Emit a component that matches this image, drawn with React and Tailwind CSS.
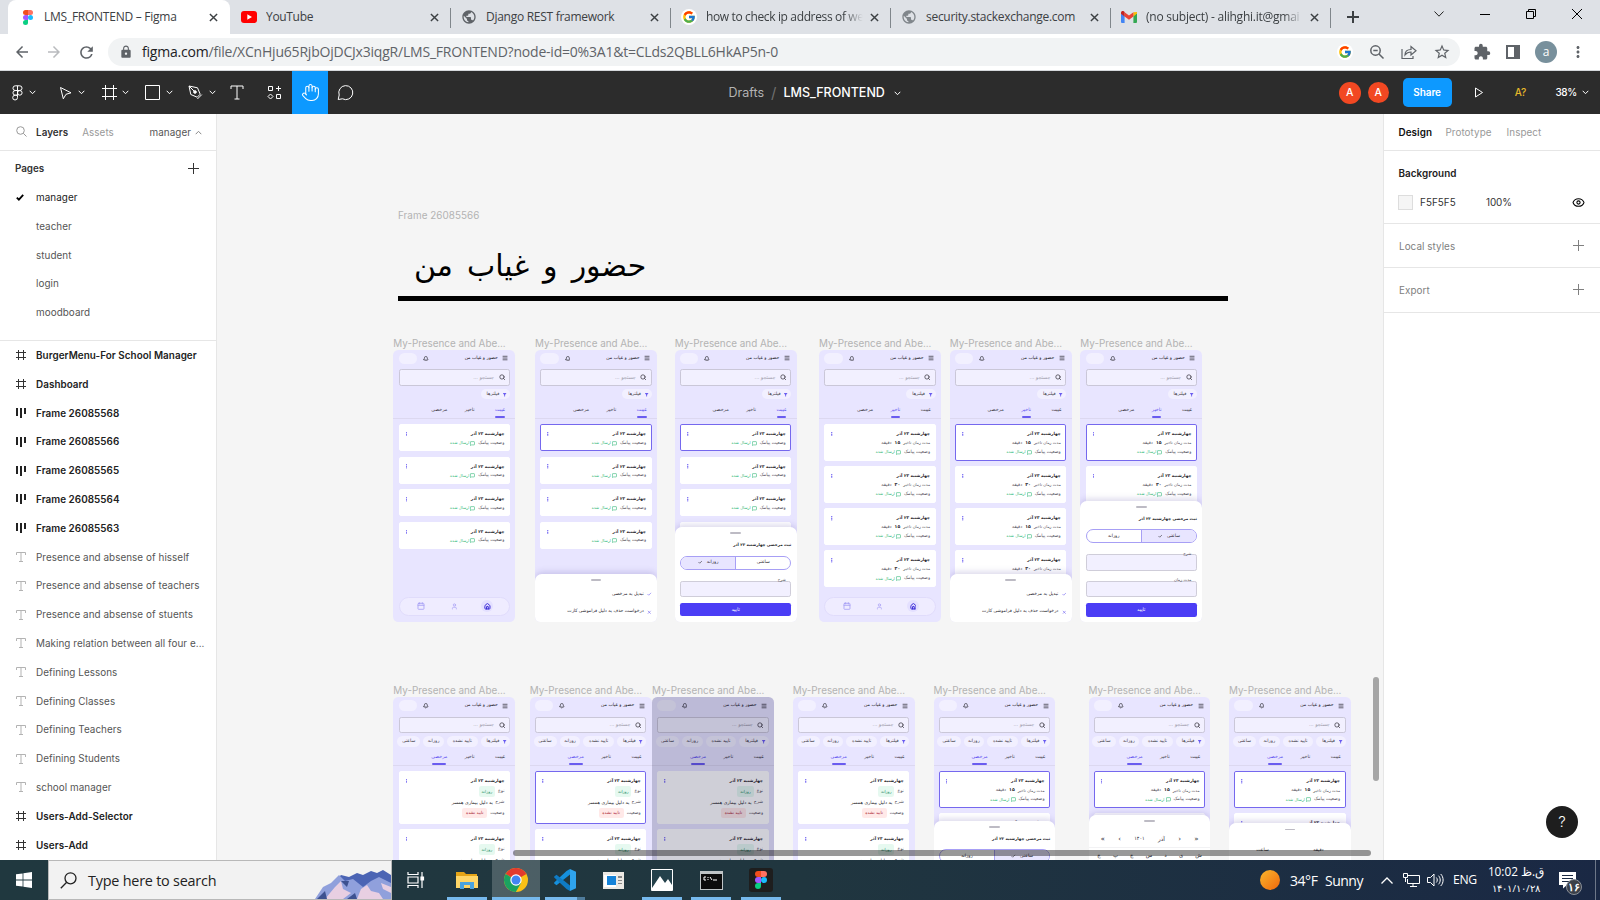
import React from "react";
import { Bell, Search, Check, X, Home, User, Calendar, Menu, MessageSquare, Hand, Eye } from "lucide-react";
import { FcGoogle } from "react-icons/fc";
import { MdPublic, MdLock, MdArrowBack, MdArrowForward, MdRefresh, MdExtension, MdStarBorder, MdMoreVert, MdFilterAlt } from "react-icons/md";

const UI = "font-['Open_Sans',sans-serif]";
const INTER = "font-['Inter',sans-serif]";
const FA = "font-['DejaVu_Sans',sans-serif]";

/* ---------- Browser chrome ---------- */

function FigmaLogo({ className }) {
  return (
    <svg viewBox="0 0 20 30" className={className}>
      <path d="M5 0h5v10H5A5 5 0 0 1 5 0z" fill="#f24e1e" />
      <path d="M10 0h5a5 5 0 0 1 0 10h-5z" fill="#ff7262" />
      <path d="M5 10h5v10H5a5 5 0 0 1 0-10z" fill="#a259ff" />
      <circle cx="15" cy="15" r="5" fill="#1abcfe" />
      <path d="M5 20h5v5a5 5 0 1 1-5-5z" fill="#0acf83" />
    </svg>
  );
}

function YoutubeLogo() {
  return (
    <svg viewBox="0 0 16 12" className="h-3 w-4">
      <rect width="16" height="12" rx="3" fill="#f00" />
      <path d="M6.3 3.3 11 6 6.3 8.7z" fill="#fff" />
    </svg>
  );
}

function GmailLogo() {
  return (
    <svg viewBox="0 0 16 12" className="h-3 w-4">
      <path d="M0 2v9a1 1 0 0 0 1 1h2.6V4.8z" fill="#4285f4" />
      <path d="M16 2v9a1 1 0 0 1-1 1h-2.6V4.8z" fill="#34a853" />
      <path d="M12.4 1.2 16 1v1.6l-3.6 2.8z" fill="#fbbc04" />
      <path d="M3.6 1.2 8 4.5l4.4-3.3v4.2L8 8.7 3.6 5.4z" fill="#ea4335" />
      <path d="M0 1.8C0 .2 1.8-.5 3 .5l.6.6v4.3L0 2.7z" fill="#c5221f" />
    </svg>
  );
}

const tabs = [
  { icon: <div className="flex w-4 justify-center"><FigmaLogo className="h-[15px] w-[10px]" /></div>, title: "LMS_FRONTEND – Figma", active: true, track: "tracking-[-0.250px]" },
  { icon: <YoutubeLogo />, title: "YouTube", track: "tracking-[-0.320px]" },
  { icon: <MdPublic className="size-4 text-[#5f6368]" />, title: "Django REST framework", line: true, track: "tracking-[-0.280px]" },
  { icon: <div className="flex size-4 items-center justify-center rounded-full bg-white"><FcGoogle className="size-[14px]" /></div>, title: "how to check ip address of we", line: true, fade: true, track: "tracking-[-0.360px]" },
  { icon: <MdPublic className="size-4 text-[#80868b]" />, title: "security.stackexchange.com", line: true, track: "tracking-[-0.280px]" },
  { icon: <GmailLogo />, title: "(no subject) - alihghi.it@gmai", line: true, fade: true, track: "tracking-[-0.240px]" },
];

function CloseX({ className }) {
  return (
    <svg viewBox="0 0 10 10" className={className} stroke="currentColor" strokeWidth="1.6">
      <path d="M1 1l8 8M9 1l-8 8" />
    </svg>
  );
}

function TabStrip() {
  return (
    <div className={`flex h-[34px] bg-[#dee1e6] pl-2 ${UI} text-[12px] text-[#3c4043]`}>
      {tabs.map((t) => (
        <div
          key={t.title}
          className={
            t.active
              ? "relative flex w-[222px] shrink-0 items-center rounded-t-lg bg-white pr-3 pl-3"
              : `relative flex w-[220px] shrink-0 items-center pr-[11px] pl-[11px] ${t.line ? "before:absolute before:top-2 before:left-0 before:h-5 before:w-px before:bg-[#80868b]" : ""}`
          }
        >
          {t.icon}
          <span
            className={`${t.active ? "ml-2" : "ml-[9px]"} w-[160px] overflow-hidden whitespace-nowrap ${t.track} ${t.fade ? "[mask-image:linear-gradient(to_right,black_86%,transparent_98%)]" : ""}`}
          >
            {t.title}
          </span>
          <CloseX className="ml-auto size-[9px] shrink-0 text-[#3c4043]" />
        </div>
      ))}
      <div className="relative flex w-[46px] items-center justify-center before:absolute before:top-2 before:left-0 before:h-5 before:w-px before:bg-[#80868b]">
        <svg viewBox="0 0 12 12" className="size-3" stroke="#3c4043" strokeWidth="2">
          <path d="M6 0v12M0 6h12" />
        </svg>
      </div>
      <div className="ml-auto flex h-7 items-center text-black">
        <div className="flex w-[46px] justify-center">
          <svg viewBox="0 0 10 6" className="h-[6px] w-[10px]" fill="none" stroke="#222"><path d="M.5.5 5 5.2 9.500.5" /></svg>
        </div>
        <div className="flex w-[46px] justify-center"><div className="h-px w-[10px] bg-black" /></div>
        <div className="flex w-[46px] justify-center">
          <svg viewBox="0 0 10 10" className="size-[10px]" fill="none" stroke="#000"><path d="M.5 2.500h7v7h-7zM2.500 2.500v-2h7v7h-2" /></svg>
        </div>
        <div className="flex w-[46px] justify-center">
          <svg viewBox="0 0 10 10" className="size-[10px]" stroke="#000"><path d="M0 0l10 10M10 0 0 10" /></svg>
        </div>
      </div>
    </div>
  );
}

function AddressBar() {
  return (
    <div className="flex h-[37px] items-center border-b border-[#d5d8dc] bg-white text-[#5f6368]">
      <div className="flex w-[108px] items-center gap-[14px] pl-[13px]">
        <MdArrowBack className="size-[18px]" />
        <MdArrowForward className="size-[18px] text-[#b9bbbe]" />
        <MdRefresh className="size-[19px]" />
      </div>
      <div className="flex h-7 w-[1352px] items-center rounded-full bg-[#f1f3f4] pr-[9px] pl-[11px]">
        <MdLock className="size-[14px]" />
        <span className={`ml-[9px] ${UI} text-[14px] leading-5 tracking-[-0.210px] whitespace-nowrap`}>
          <span className="text-[#202124]">figma.com</span>/file/XCnHju65RjbOjDCJx3iqgR/LMS_FRONTEND?node-id=0%3A1&amp;t=CLds2QBLL6HkAP5n-0
        </span>
        <div className="ml-auto flex items-center gap-4">
          <div className="flex size-4 items-center justify-center rounded-full bg-white"><FcGoogle className="size-[14px]" /></div>
          <svg viewBox="0 0 16 16" className="size-4" fill="none" stroke="currentColor" strokeWidth="1.5"><circle cx="6.500" cy="6.500" r="4.700" /><path d="M10 10l4.500 4.500M4.300 6.500h4.400" /></svg>
          <svg viewBox="0 0 16 16" className="size-4" fill="none" stroke="currentColor" strokeWidth="1.200"><path d="M1 5v9.500h11V12M4 11c0-3.500 2-5.500 6-5.500V2.500l5 4.200-5 4.200V8C7.500 8 5.500 9 4 11z" /></svg>
          <MdStarBorder className="size-[18px]" />
        </div>
      </div>
      <div className="flex flex-1 items-center justify-between pr-[13px] pl-[13px]">
        <MdExtension className="size-[18px]" />
        <svg viewBox="0 0 14 14" className="ml-[3px] size-[14px]" fill="none" stroke="currentColor" strokeWidth="2"><path d="M1 1h12v12H1z" /><path d="M9 1h4v12H9z" fill="currentColor" /></svg>
        <div className={`ml-[3px] flex size-[22px] items-center justify-center rounded-full bg-[#78909c] ${UI} text-[12px] text-white`}>a</div>
        <MdMoreVert className="size-[18px]" />
      </div>
    </div>
  );
}

/* ---------- Editor toolbar ---------- */

function Caret({ className = "" }) {
  return (
    <svg viewBox="0 0 7 5" className={`h-[5px] w-[7px] shrink-0 ${className}`} fill="none" stroke="currentColor">
      <path d="M.7.8 3.500 3.700 6.300.8" />
    </svg>
  );
}

function Tool({ children, className }) {
  return <div className={`flex h-full shrink-0 items-center ${className}`}>{children}</div>;
}

function EditorBar() {
  return (
    <div className={`flex h-[43px] items-center bg-[#2c2c2c] text-white ${INTER}`}>
      <div className="flex h-full w-[728.500px] items-center">
        <Tool className="w-[48px] gap-[6px] pl-[12px]">
          <svg viewBox="0 0 11 16" className="h-4 w-[11px]" fill="none" stroke="currentColor">
            <path d="M5.500.8H3.300a2.300 2.300 0 0 0 0 4.700h2.200zM5.500.8h2.200a2.300 2.300 0 0 1 0 4.700H5.500zM5.500 5.500H3.300a2.300 2.300 0 0 0 0 4.700h2.200zM5.500 10.200H3.300a2.400 2.400 0 1 0 2.200 2.400z" />
            <circle cx="7.800" cy="7.850" r="2.300" />
          </svg>
          <Caret />
        </Tool>
        <Tool className="w-[50px] gap-[6px] pl-[11px]">
          <svg viewBox="0 0 13 14" className="h-[14px] w-[13px]" fill="none" stroke="currentColor"><path d="M1.500 1.500 12 6.800 7 8.300 4.300 12.800z" /></svg>
          <Caret />
        </Tool>
        <Tool className="w-[44px] gap-[5px] pl-[4px]">
          <svg viewBox="0 0 15 15" className="size-[15px]" fill="none" stroke="currentColor"><path d="M3.500 0v15M11.500 0v15M0 3.500h15M0 11.500h15" /></svg>
          <Caret />
        </Tool>
        <Tool className="w-[43px] gap-[6px] pl-[3px]">
          <svg viewBox="0 0 15 15" className="size-[15px]" fill="none" stroke="currentColor"><path d="M.5.5h14v14H.5z" /></svg>
          <Caret />
        </Tool>
        <Tool className="w-[44px] gap-[6px] pl-[3px]">
          <svg viewBox="0 0 15 15" className="size-[15px]" fill="none" stroke="currentColor">
            <path d="M1 1l8.500 1.800 2.700 6.400-3 3-6.400-2.700zM1 1l5 5M13.800 9.600l-4.400 4.400" /><circle cx="7" cy="7" r="1.300" fill="currentColor" />
          </svg>
          <Caret />
        </Tool>
        <Tool className="w-[30px] pl-px">
          <svg viewBox="0 0 14 15" className="h-[15px] w-[14px]" fill="none" stroke="currentColor"><path d="M1 4V1h12v3M7 1v13M4.500 14h5" /></svg>
        </Tool>
        <Tool className="w-[33px] pl-[8px]">
          <svg viewBox="0 0 15 15" className="size-[15px]" fill="none" stroke="currentColor"><path d="M1.500 1.500h4v4h-4zM9.500 9.500h4v4h-4zM11.500 1v5M9 3.500h5M3.500 9 6 11.500 3.500 14 1 11.500z" /></svg>
        </Tool>
        <Tool className="w-[36px] justify-center bg-[#0d99ff]">
          <Hand className="size-[19px]" strokeWidth={1.3} />
        </Tool>
        <Tool className="w-[35px] pl-[9px]">
          <svg viewBox="0 0 17 17" className="size-[17px]" fill="none" stroke="currentColor"><path d="M1.200 15.500 2.200 11A7 7 0 1 1 5.500 14.800z" /></svg>
        </Tool>
      </div>
      <div className="flex items-center pt-px text-[12.500px]">
        <span className="text-[#b3b3b3]">Drafts</span>
        <span className="mx-[7px] text-[15px] text-[#6f6f6f]">/</span>
        <span className="font-medium">LMS_FRONTEND</span>
        <Caret className="ml-[9px]" />
      </div>
      <div className="ml-auto flex items-center text-[10px] font-medium">
        <div className="flex size-[22px] items-center justify-center rounded-full bg-[#f24822] text-[10.500px]">A</div>
        <div className="ml-[7px] flex size-[21px] items-center justify-center rounded-full bg-[#f24822] text-[10.500px]">A</div>
        <div className="ml-[14px] flex h-[29px] w-[49px] items-center justify-center rounded-[5px] bg-[#0d99ff] font-semibold tracking-[-0.1px]">Share</div>
        <svg viewBox="0 0 10 11" className="ml-[22px] h-[11px] w-[10px]" fill="none" stroke="currentColor"><path d="M1.500 1v9l7-4.500z" /></svg>
        <span className="ml-[31px] text-[#e5b82a]">A?</span>
        <span className="ml-[29px] tracking-[-0.3px]">38%</span>
        <Caret className="mr-[11px] ml-[5px]" />
      </div>
    </div>
  );
}

/* ---------- Left panel ---------- */

const pages = ["manager", "teacher", "student", "login", "moodboard"];
const layers = [
  ["frame", "BurgerMenu-For School Manager"],
  ["frame", "Dashboard"],
  ["auto", "Frame 26085568"],
  ["auto", "Frame 26085566"],
  ["auto", "Frame 26085565"],
  ["auto", "Frame 26085564"],
  ["auto", "Frame 26085563"],
  ["text", "Presence and absense of hisself"],
  ["text", "Presence and absense of teachers"],
  ["text", "Presence and absense of stuents"],
  ["text", "Making relation between all four e..."],
  ["text", "Defining Lessons"],
  ["text", "Defining Classes"],
  ["text", "Defining Teachers"],
  ["text", "Defining Students"],
  ["text", "school manager"],
  ["frame", "Users-Add-Selector"],
  ["frame", "Users-Add"],
];

function LayerIcon({ kind }) {
  if (kind === "frame")
    return <svg viewBox="0 0 10 10" className="size-[10px]" fill="none" stroke="#333"><path d="M2.500 0v10M7.500 0v10M0 2.500h10M0 7.500h10" /></svg>;
  if (kind === "auto")
    return <svg viewBox="0 0 10 10" className="size-[10px]" fill="#222"><path d="M0 0h2v8H0zM4 0h2v10H4zM8 0h2v6H8z" /></svg>;
  return <svg viewBox="0 0 10 10" className="size-[10px]" fill="none" stroke="#b3b3b3"><path d="M.5 3V.5h9V3M5 .5v9M3 9.500h4" /></svg>;
}

function LeftPanel() {
  return (
    <div className="flex w-[217px] shrink-0 flex-col overflow-hidden border-r border-[#e6e6e6] bg-white text-[#333]">
      <div className="flex h-[37px] shrink-0 items-center border-b border-[#e6e6e6] pr-[14px] pl-[16px]">
        <svg viewBox="0 0 11 11" className="-mt-[2px] size-[11px]" fill="none" stroke="#999"><circle cx="4.500" cy="4.500" r="3.800" /><path d="M7.300 7.300l3.200 3.200" /></svg>
        <span className="ml-[9px] font-semibold">Layers</span>
        <span className="ml-[14px] text-[#999]">Assets</span>
        <span className="ml-auto text-[#555]">manager</span>
        <Caret className="ml-[4px] rotate-180 text-[#888]" />
      </div>
      <div className="flex h-[32px] shrink-0 items-center justify-between pt-[3px] pr-[17px] pl-[15px]">
        <span className="font-semibold tracking-[-0.05px]">Pages</span>
        <svg viewBox="0 0 11 11" className="-mt-px size-[11px]" stroke="#333"><path d="M5.500 0v11M0 5.500h11" /></svg>
      </div>
      <div className="h-[158px] shrink-0 border-b border-[#e6e6e6]">
        {pages.map((p, i) => (
          <div key={p} className={`flex h-[28.8px] items-center pl-[16px] ${i === 0 ? "text-[#222]" : "text-[#555]"}`}>
            <div className="w-5">
              {i === 0 && <svg viewBox="0 0 8 7" className="h-[7px] w-2" fill="none" stroke="#000" strokeWidth="1.800"><path d="M.8 3.600 2.900 5.700 7.200.9" /></svg>}
            </div>
            {p}
          </div>
        ))}
      </div>
      <div className="flex flex-col">
        {layers.map(([kind, name]) => (
          <div key={name} className={`flex h-[28.8px] shrink-0 items-center pl-[16px] whitespace-nowrap ${kind === "text" ? "text-[#555]" : "font-semibold text-[#222]"}`}>
            <div className="w-5"><LayerIcon kind={kind} /></div>
            {name}
          </div>
        ))}
      </div>
    </div>
  );
}

/* ---------- Right panel ---------- */

function PlusRow({ label, className }) {
  return (
    <div className={`flex items-center justify-between border-b border-[#e6e6e6] pr-[16px] pl-[15px] text-[#808080] ${className}`}>
      <span className="pt-px">{label}</span>
      <svg viewBox="0 0 11 11" className="-mt-px size-[11px]" stroke="#808080"><path d="M5.500 0v11M0 5.500h11" /></svg>
    </div>
  );
}

function RightPanel() {
  return (
    <div className="flex w-[217px] shrink-0 flex-col border-l border-[#e6e6e6] bg-white text-[#333]">
      <div className="flex h-[37px] items-center gap-[13px] border-b border-[#e6e6e6] pl-[14.500px] text-[#999]">
        <span className="font-semibold text-[#111]">Design</span>
        <span className="pl-[0.500px]">Prototype</span>
        <span className="pl-[2px]">Inspect</span>
      </div>
      <div className="h-[73px] border-b border-[#e6e6e6] pt-[8px] pr-[15px] pl-[14px]">
        <div className="flex h-[29px] items-center pl-[0.500px] font-semibold text-[#222]">Background</div>
        <div className="flex h-[28px] items-center">
          <div className="size-[15px] border border-[#ddd] bg-[#f5f5f5]" />
          <span className="ml-[7px] w-[66px]">F5F5F5</span>
          <span className="tracking-[-0.1px]">100%</span>
          <Eye className="ml-auto size-[13px] text-black" />
        </div>
      </div>
      <PlusRow label="Local styles" className="h-[44px] pt-px" />
      <PlusRow label="Export" className="h-[45px]" />
      <div className="mt-auto flex justify-end pr-[22px] pb-[22px]">
        <div className="flex size-8 items-center justify-center rounded-full bg-[#1e1e1e] text-[15px] font-light text-white">?</div>
      </div>
    </div>
  );
}

/* ---------- Mobile frames (320 x 715 design units) ---------- */

function Chip({ children, className }) {
  return <div className={`flex h-[27px] shrink-0 items-center rounded-full bg-[#f2f0ff] text-[12px] whitespace-nowrap text-[#3c3943] ${className}`}>{children}</div>;
}

function CardShell({ selected, className, children }) {
  return (
    <div className={`flex shrink-0 flex-col rounded-[5px] bg-white pr-[12px] pl-[16px] whitespace-nowrap ${selected ? "border-[2.600px] border-[#7568ee]" : "border-2 border-white"} ${className}`}>
      {children}
    </div>
  );
}

function CardTitle({ className }) {
  return (
    <div className={`flex items-center justify-between ${className}`}>
      <span className="text-[11px] font-bold text-[#1c1b1f]">چهارشنبه ۲۳ آذر</span>
      <svg viewBox="0 0 4 12" className="h-3 w-1" fill="#5a4bf0"><circle cx="2" cy="1.800" r="1.700" /><circle cx="2" cy="6" r="1.700" /><circle cx="2" cy="10.200" r="1.700" /></svg>
    </div>
  );
}

function SmsRow() {
  return (
    <div className="flex h-6 items-center text-[12px]">
      <span className="text-[#55525b]">وضعیت پیامک</span>
      <MessageSquare className="mr-[8px] size-[13px] text-[#2bb673]" strokeWidth={2.800} />
      <span className="mr-[3px] text-[10.500px] text-[#2bb673]">ارسال شده</span>
    </div>
  );
}

function Card({ kind, selected, index }) {
  const row = "flex h-7 items-center text-[12px] text-[#55525b]";
  if (kind === "leave")
    return (
      <CardShell selected={selected} className="h-[138px] pt-[9px]">
        <CardTitle className="h-7" />
        <div className={row}>
          نوع<span className="mr-[8px] flex h-7 w-[43px] items-center justify-center rounded-[6px] bg-[#e6f9f0] text-[11px] text-[#12875a]">روزانه</span>
        </div>
        <div className={row}>
          شرح<span className="mr-[6px] text-[12.300px] text-[#1c1b1f]">به دلیل بیماری همسر</span>
        </div>
        <div className={row}>
          وضعیت<span className="mr-[8px] flex h-7 w-[66px] items-center justify-center rounded-[6px] bg-[#ffe9e8] text-[11px] text-[#a8182f]">تایید نشده</span>
        </div>
      </CardShell>
    );
  return (
    <CardShell selected={selected} className={kind === "late" ? "h-[96px] pt-3" : "h-[71px] pt-3"}>
      <CardTitle className="h-6" />
      {kind === "late" && (
        <div className="flex h-6 items-center text-[10.500px] text-[#55525b]">
          مدت زمان تاخیر<span className="mx-[8px] text-[12px] font-bold text-[#2a2830]">{index % 2 ? "۳۰" : "۱۵"}</span><span className="text-[12px]">دقیقه</span>
        </div>
      )}
      <SmsRow />
    </CardShell>
  );
}

function Segmented({ hourly }) {
  const on = "bg-[#e8e5ff]";
  return (
    <div className="flex h-[37px] shrink-0 overflow-hidden rounded-full border-[2.600px] border-[#a79ff5] text-[12px] text-[#2a2830]">
      <div className={`flex flex-1 items-center justify-center gap-3 border-l-[2.600px] border-[#a79ff5] ${hourly ? on : ""}`}>ساعتی{hourly && <Check className="size-3" strokeWidth={3} />}</div>
      <div className={`flex flex-1 items-center justify-center gap-3 ${hourly ? "" : on}`}>روزانه{!hourly && <Check className="size-3" strokeWidth={3} />}</div>
    </div>
  );
}

function Field({ label, className }) {
  return (
    <div className={`relative h-[43px] shrink-0 rounded-[6px] border-2 border-[#cfcdd9] bg-[#f2f0ff] ${className}`}>
      <span className="absolute -top-[12px] right-[12px] text-[10.500px] leading-[14px] whitespace-nowrap text-[#55525b]">{label}</span>
    </div>
  );
}

const Handle = () => <div className="mx-auto h-[4px] w-7 shrink-0 rounded-full bg-[#bdbbc4]" />;

function Sheet({ sheet }) {
  return (
    <div
      className="absolute inset-x-0 bottom-0 flex flex-col overflow-hidden rounded-t-[18px] bg-white px-[14px] pt-[14px] text-[12px] whitespace-nowrap text-[#2a2830] shadow-[0_-4px_18px_rgba(80,70,160,0.22)]"
      style={{ top: sheet.top }}
    >
      <Handle />
      {sheet.type === "menu" && (
        <div className="flex flex-col pt-[13px]">
          <div className="flex h-[46px] items-center"><Check className="ml-[9px] size-3 text-[#6a5cf0]" strokeWidth={3} />تبدیل به مرخصی</div>
          <div className="flex h-[46px] items-center"><X className="ml-[9px] size-3 text-[#6a5cf0]" strokeWidth={3} />درخواست حذف به دلیل فراموشی کارت</div>
        </div>
      )}
      {(sheet.type === "hourly" || sheet.type === "daily") && (
        <>
          <div className="mt-[21px] mb-[18px] h-[18px] shrink-0 text-[10.500px] leading-[18px] font-bold text-[#1c1b1f]">ثبت مرخصی چهارشنبه ۲۳ آذر</div>
          <Segmented hourly={sheet.type === "hourly"} />
          <Field label="شرح" className="mt-[29px]" />
          {sheet.type === "hourly" && <Field label="مدت زمان" className="mt-[27px]" />}
          <div className="mt-4 flex h-[35px] shrink-0 items-center justify-center rounded-[6px] bg-[#4b3df5] text-[13px] text-white">تایید</div>
        </>
      )}
      {sheet.type === "calendar" && (
        <>
          <div className="mt-[33px] flex h-6 shrink-0 items-center justify-between px-[18px] text-[15px]">
            <span className="text-[18px] leading-none">«</span><span className="text-[18px] leading-none">‹</span><span>آذر</span><span className="text-[13px]">۱۴۰۱</span><span className="text-[18px] leading-none">›</span><span className="text-[18px] leading-none">»</span>
          </div>
          <div className="-mx-[14px] mt-[8px] h-[5px] shrink-0 bg-[#f2f2f4]" />
          <div className="mt-[13px] flex justify-between px-[9px] text-[14px] leading-none">
            {"شیدسچپج".split("").map((c) => <span key={c}>{c}</span>)}
          </div>
        </>
      )}
      {sheet.type === "time" && <div className="mt-[44px] flex justify-between px-[58px]"><span>دقیقه</span><span>ساعت</span></div>}
    </div>
  );
}

const tabDefs = [["غیبت", "w-[26px]"], ["تاخیر", "w-[24px]"], ["مرخصی", "w-[37px]"]];

function Phone({ phone }) {
  const { tab, kind, count, selected, sheet, nav, chips, dim } = phone;
  return (
    <div dir="rtl" className={`relative h-[715px] w-[321px] overflow-hidden rounded-[14px] bg-[#e8e5ff] [zoom:0.38] ${FA}`}>
      <div className="flex h-11 items-center pr-[18px] pl-[14px]">
        <Menu className="size-[16px] text-[#3c3943]" strokeWidth={3} />
        <span className="mr-[12px] text-[12px] text-[#1c1b1f]">حضور و غیاب من</span>
        <Bell className="mr-auto size-[15px] text-[#1c1b1f]" strokeWidth={2.500} />
        <div className="mr-4 h-[29px] w-12 rounded-full bg-[#f2f0ff]" />
      </div>
      <div className="mx-[14px] mt-[7px] flex h-[43px] items-center rounded-[6px] border-2 border-[#cac7d8] bg-[#f2f0ff] pr-[10px]">
        <Search className="size-[17px] text-[#3c3943]" strokeWidth={2.800} />
        <span className="mr-[12px] text-[13px] text-[#a09dac]">جستجو ...</span>
      </div>
      <div className="mt-[9px] flex pr-[14px]">
        <Chip className="w-[77px] gap-[7px] pr-[7px]"><MdFilterAlt className="size-[14px] text-[#6a5cf0]" />فیلترها</Chip>
        {chips && (
          <>
            <Chip className="mr-2 w-[81px] justify-center">تایید نشده</Chip>
            <Chip className="mr-2 w-[54px] justify-center">روزانه</Chip>
            <Chip className="mr-2 w-[61px] justify-center">ساعتی</Chip>
          </>
        )}
      </div>
      <div className="flex h-[51px] border-b-2 border-[#dcd8f0]">
        {tabDefs.map(([name, w], i) => (
          <div key={name} className={`flex w-20 flex-col items-center pt-[19px] text-[12.500px] leading-[18px] ${tab === i ? "text-[#5a4bf0]" : "text-[#3c3943]"}`}>
            {name}
            {tab === i && <div className={`mt-auto h-[5px] rounded-full bg-[#6a5cf0] ${w}`} />}
          </div>
        ))}
      </div>
      <div className="flex flex-col gap-[14.700px] px-[14px] pt-[14px]">
        {Array.from({ length: count }, (_, i) => <Card key={i} kind={kind} selected={selected && i === 0} index={i} />)}
      </div>
      {nav && (
        <div className="absolute right-[14px] bottom-[15px] left-[14px] flex h-[51px] items-center justify-between rounded-full border-2 border-[#e0dcfb] bg-[#efecff] pr-[41px] pl-[40px]">
          <div className="flex size-8 items-center justify-center rounded-full bg-[#e4e0ff]"><Home className="size-[18px] text-[#3a2bd8]" strokeWidth={3.500} /></div>
          <div className="flex w-8 justify-center"><User className="size-[18px] text-[#a79ff5]" strokeWidth={2.500} /></div>
          <div className="flex w-8 justify-center"><Calendar className="size-[21px] text-[#a79ff5]" strokeWidth={2.500} /></div>
        </div>
      )}
      {sheet && <Sheet sheet={sheet} />}
      {dim && <div className="absolute inset-0 bg-[#00002c]/19" />}
    </div>
  );
}

const phones = [
  { x: 176.3, y: 236, tab: 0, kind: "absent", count: 4, nav: true },
  { x: 318, y: 236, tab: 0, kind: "absent", count: 4, selected: true, sheet: { type: "menu", top: 589 } },
  { x: 457.7, y: 236, tab: 0, kind: "absent", count: 4, selected: true, sheet: { type: "daily", top: 466 } },
  { x: 602, y: 236, tab: 1, kind: "late", count: 4, nav: true },
  { x: 732.7, y: 236, tab: 1, kind: "late", count: 4, selected: true, sheet: { type: "menu", top: 589 } },
  { x: 863.3, y: 236, tab: 1, kind: "late", count: 2, selected: true, sheet: { type: "hourly", top: 397 } },
  { x: 176.3, y: 583.3, tab: 2, kind: "leave", count: 2, chips: true },
  { x: 312.7, y: 583.3, tab: 2, kind: "leave", count: 2, chips: true, selected: true },
  { x: 435, y: 583.3, tab: 2, kind: "leave", count: 2, chips: true, dim: true },
  { x: 575.7, y: 583.3, tab: 2, kind: "leave", count: 2, chips: true },
  { x: 716.5, y: 583.3, tab: 2, kind: "late", count: 2, chips: true, selected: true, sheet: { type: "hourly", top: 325 } },
  { x: 871.5, y: 583.3, tab: 2, kind: "late", count: 2, chips: true, selected: true, sheet: { type: "calendar", top: 310 } },
  { x: 1012, y: 583.3, tab: 2, kind: "late", count: 2, chips: true, selected: true, sheet: { type: "time", top: 332 } },
];

function Canvas() {
  return (
    <div className="relative flex-1 overflow-hidden bg-[#f5f5f5]">
      <div className="absolute top-[94px] left-[181px] leading-[14px] text-[#b3b3b3]">Frame 26085566</div>
      <div dir="rtl" className={`absolute top-[130px] left-[181px] flex h-[57px] w-[830px] justify-end border-b-[5px] border-black pl-4 text-[30px] leading-[44px] text-black [word-spacing:4.500px] ${FA}`}>
        حضور و غیاب من
      </div>
      {phones.map((p) => (
        <div key={`${p.x}-${p.y}`} className="absolute" style={{ left: p.x, top: p.y - 14 }}>
          <div className="h-[14px] leading-[14px] tracking-[-0.01px] whitespace-nowrap text-[#b3b3b3]">My-Presence and Abe...</div>
          <Phone phone={p} />
        </div>
      ))}
      <div className="absolute top-[736px] left-[296px] h-[6px] w-[858px] rounded-full bg-black/40" />
      <div className="absolute top-[563px] right-[4px] h-[104px] w-[6px] rounded-full bg-[#a6a6a6]" />
    </div>
  );
}

/* ---------- Taskbar ---------- */

function TaskItem({ children, bar, active, className = "" }) {
  return (
    <div className={`relative flex h-full w-12 shrink-0 items-center justify-center ${active ? "bg-white/20" : ""} ${className}`}>
      {children}
      {bar && <div className={`absolute bottom-0 h-[3px] bg-[#76b9ed] ${bar}`} />}
    </div>
  );
}

function Taskbar() {
  return (
    <div className={`flex h-10 items-center bg-linear-to-r from-[#20383f] via-[#20363f] to-[#1a2844] text-white ${UI}`}>
      <div className="flex w-12 justify-center">
        <svg viewBox="0 0 16 16" className="size-4" fill="#fff"><path d="M0 2.300 6.600 1.400v6.200H0zM7.400 1.300 16 0v7.600H7.400zM0 8.400h6.600v6.200L0 13.700zM7.400 8.400H16V16l-8.600-1.300z" /></svg>
      </div>
      <div className="flex h-10 w-[344px] items-center border border-[#b8b8b8] bg-[#f2f2f2] pl-[11px] text-[#222]">
        <svg viewBox="0 0 17 17" className="size-[17px]" fill="none" stroke="#222" strokeWidth="1.300"><circle cx="10.500" cy="6.300" r="5.500" /><path d="M6.700 10.300.8 16.300" /></svg>
        <span className="ml-[11px] pt-px text-[14.400px] tracking-[-0.220px] whitespace-nowrap">Type here to search</span>
        <svg viewBox="0 0 78 30" className="mt-[8px] ml-auto h-[30px] w-[78px]">
          <path d="M8 22 22 12l6-6 8 2 8-4 6 2 8-4 6 2 6-3 8 5v26H4z" fill="#4b64b4" />
          <path d="M2 30 10 18l8-4 8-8 6 6 8-2 10 8 8-6 8-4 12 6v16z" fill="#90a0dc" />
          <path d="M12 30l10-12 6-6 2 8 8 4-8 6zM44 30l4-10 6-4 4 6 8 2 4 6zM68 14l10 4v6l-8-4z" fill="#e8cfe2" />
          <path d="M4 30l8-8 2 8zM34 30l8-6 2 6zM28 12l6 6 2-6z" fill="#3d5190" />
        </svg>
      </div>
      <TaskItem>
        <svg viewBox="0 0 18 16" className="h-4 w-[18px]" fill="none" stroke="#fff" strokeWidth="1.200"><path d="M1 0v2.500h10V0M1 5h10v6H1zM1 16v-2.500h10V16M15 0v16" /><path d="M14 5h2.500v3H14z" fill="#fff" /></svg>
      </TaskItem>
      <TaskItem bar="w-10" className="ml-[3px]">
        <svg viewBox="0 0 22 18" className="h-[18px] w-[22px]"><path d="M0 1h8l2 2h11v13H0z" fill="#e5a417" /><path d="M0 5h22v12H0z" fill="#ffd667" /><path d="M4 18v-7h14v7h-4v-4H8v4z" fill="#4aa3df" /></svg>
      </TaskItem>
      <TaskItem active bar="w-12" className="ml-px">
        <svg viewBox="0 0 24 24" className="size-6">
          <circle cx="12" cy="12" r="12" fill="#fbc116" />
          <path d="M12 12 1.600 6A12 12 0 0 1 22.400 6z" fill="#e33b2e" />
          <path d="M12 12 1.600 6a12 12 0 0 0 10.200 18L17 15z" fill="#1aa260" />
          <circle cx="12" cy="12" r="5.700" fill="#fff" /><circle cx="12" cy="12" r="4.500" fill="#4285f4" />
        </svg>
      </TaskItem>
      <TaskItem bar="left-[5px] w-[32px]">
        <svg viewBox="0 0 24 24" className="ml-[2px] size-6">
          <path d="M17 1v5.500L3.500 17.200 1.200 15.500v-1L13.500 3z" fill="#1590dd" />
          <path d="M17 23v-5.500L3.500 6.800 1.200 8.500v1L13.500 21z" fill="#0f7bc4" />
          <path d="M17 1l6 2.800v16.400L17 23z" fill="#2fa4ee" />
        </svg>
        <div className="absolute right-[3px] bottom-0 h-[3px] w-2 bg-[#4f7c9c]" />
      </TaskItem>
      <TaskItem className="ml-px">
        <svg viewBox="0 0 21 17" className="h-[17px] w-[21px]"><path d="M0 0h21v17H0z" fill="#ece9e4" /><path d="M1 3h12v12H1z" fill="#fff" /><path d="M4 4h9v9H4z" fill="#1683d8" /><path d="M15 4h4v2h-4zM15 8h4v1h-4zM15 11h4v1h-4z" fill="#888" /></svg>
      </TaskItem>
      <TaskItem bar="w-10" className="ml-px">
        <svg viewBox="0 0 22 22" className="size-[22px]"><path d="M.5.500h21v21H.5z" fill="#24414b" stroke="#fff" /><path d="M1 19 9 7l5 7 3-4 4 6v5H1z" fill="#fff" /></svg>
      </TaskItem>
      <TaskItem bar="w-10" className="ml-px">
        <svg viewBox="0 0 23 19" className="h-[19px] w-[23px]"><path d="M0 0h23v19H0z" fill="#bfc4c6" /><path d="M1 3h21v15H1z" fill="#0c0c0c" /><path d="M6 6H4v3h2M8 6v1M8 8v1M10 6l2 3M13 9h4" stroke="#fff" fill="none" /></svg>
      </TaskItem>
      <TaskItem bar="w-10" className="ml-[2px]">
        <div className="flex size-[24px] items-center justify-center rounded-[3px] bg-[#1e1e1e]"><FigmaLogo className="h-[18px] w-[12px]" /></div>
      </TaskItem>
      <div className="ml-auto flex items-center text-[14px]">
        <div className="size-5 rounded-full bg-linear-to-br from-[#f8b62c] to-[#f0660a]" />
        <span className="ml-[10px] w-[27px] pt-px tracking-[-0.450px] whitespace-nowrap">34°F</span>
        <span className="ml-[8px] w-[38px] pt-px tracking-[-0.500px]">Sunny</span>
        <svg viewBox="0 0 12 7" className="ml-[18px] h-[7px] w-3" fill="none" stroke="#fff" strokeWidth="1.300"><path d="M.5 6.500 6 1l5.500 5.500" /></svg>
        <svg viewBox="0 0 17 14" className="ml-[10px] h-[14px] w-[17px]" fill="none" stroke="#fff"><path d="M5 2.500h11.500v8H4.500V6M10 10.500v3M7 13.500h7M.5.500h4v4h-4zM2.500 4.500V9" /></svg>
        <svg viewBox="0 0 17 14" className="ml-[7px] h-[14px] w-[17px]" fill="none" stroke="#fff"><path d="M.5 4.500h3L7 1v12L3.500 9.500h-3zM9.300 4.500c1.300 1.400 1.300 3.600 0 5M11.500 2.700c2.300 2.400 2.300 6.200 0 8.600M13.700 1c3.200 3.300 3.200 8.700 0 12" /></svg>
        <span className="ml-[9px] w-6 text-[12.200px] tracking-[-0.300px]">ENG</span>
        <div className="ml-[12px] flex w-[54px] flex-col items-center leading-[18px] whitespace-nowrap">
          <span className="text-[11.800px] tracking-[-0.600px]">10:02 ق.ظ</span>
          <span dir="rtl" className="text-[9.800px]">۱۴۰۱/۱۰/۲۸</span>
        </div>
        <div className="relative ml-[16px] h-[17px] w-[17px]">
          <svg viewBox="0 0 17 17" className="size-[17px]" fill="#fff"><path d="M0 0h17v13H8l-4 3.500V13H0z" /><path d="M3 3.500h11M3 6.500h11M3 9.500h7" stroke="#1b2a44" /></svg>
          <div className="absolute top-[7px] left-[7px] flex size-4 items-center justify-center rounded-full border border-[#8a8f98] bg-[#3b4048] text-[11px] leading-none font-bold">۱۶</div>
        </div>
        <div className="ml-[19px] h-10 w-px bg-[#6d7788]" />
        <div className="w-1" />
      </div>
    </div>
  );
}

export default function App() {
  return (
    <div className="flex h-[900px] w-[1600px] flex-col overflow-hidden bg-white">
      <TabStrip />
      <AddressBar />
      <EditorBar />
      <div className={`flex min-h-0 flex-1 ${INTER} text-[9.900px] tracking-[0.05px]`}>
        <LeftPanel />
        <Canvas />
        <RightPanel />
      </div>
      <Taskbar />
    </div>
  );
}
